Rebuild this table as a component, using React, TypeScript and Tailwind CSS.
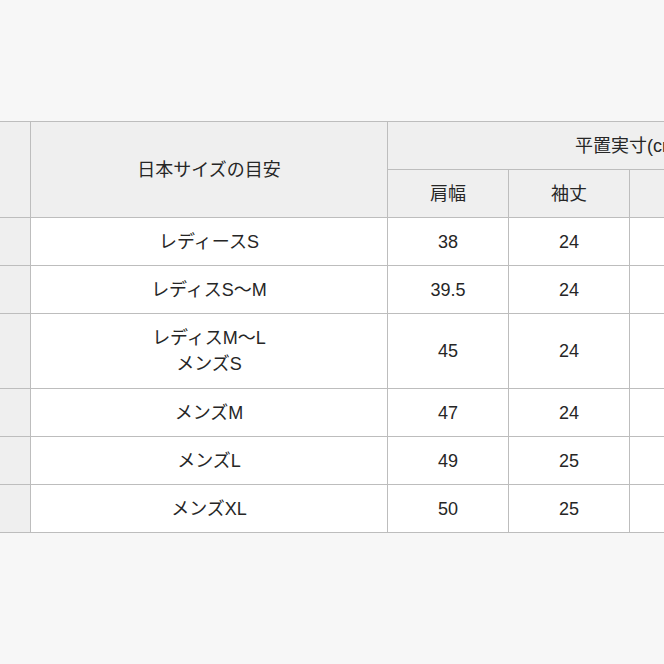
const font = 'font-["Liberation_Sans","Noto_Sans_CJK_JP",sans-serif]';

type Row = { size: string[]; shoulder: string; sleeve: string; length: string; width: string };

const rows: Row[] = [
  { size: ['レディースS'], shoulder: '38', sleeve: '24', length: '64', width: '50' },
  { size: ['レディスS〜M'], shoulder: '39.5', sleeve: '24', length: '66', width: '52' },
  { size: ['レディスM〜L', 'メンズS'], shoulder: '45', sleeve: '24', length: '68', width: '55' },
  { size: ['メンズM'], shoulder: '47', sleeve: '24', length: '70', width: '57' },
  { size: ['メンズL'], shoulder: '49', sleeve: '25', length: '72', width: '59' },
  { size: ['メンズXL'], shoulder: '50', sleeve: '25', length: '74', width: '61' },
];

const cell = 'border border-[#bdbdbd] text-center align-middle p-0';

export default function App() {
  return (
    <div className={`w-[664px] h-[664px] overflow-hidden bg-[#f7f7f7] pt-[121px] ${font}`}>
      <table className="table-fixed border-collapse ml-[-13px] w-[883px] text-[18px] leading-[26px] text-[#262626]">
        <colgroup>
          <col className="w-[43px]" />
          <col className="w-[357px]" />
          <col className="w-[121px]" />
          <col className="w-[121px]" />
          <col className="w-[121px]" />
          <col className="w-[120px]" />
        </colgroup>
        <thead>
          <tr className="h-[48px] bg-[#efefef]">
            <th rowSpan={2} className={cell}></th>
            <th rowSpan={2} className={`${cell} font-normal`}>日本サイズの目安</th>
            <th colSpan={4} className={`${cell} font-normal`}>平置実寸(cm)</th>
          </tr>
          <tr className="h-[48px] bg-[#efefef]">
            <th className={`${cell} font-normal`}>肩幅</th>
            <th className={`${cell} font-normal`}>袖丈</th>
            <th className={`${cell} font-normal`}>着丈</th>
            <th className={`${cell} font-normal`}>身幅</th>
          </tr>
        </thead>
        <tbody>
          {rows.map((r) => (
            <tr key={r.size.join('/')} className={r.size.length > 1 ? 'h-[75px]' : 'h-[48px]'}>
              <td className={`${cell} bg-[#efefef]`}></td>
              <td className={`${cell} bg-white`}>
                {r.size.map((s) => (
                  <div key={s}>{s}</div>
                ))}
              </td>
              <td className={`${cell} bg-white`}>{r.shoulder}</td>
              <td className={`${cell} bg-white`}>{r.sleeve}</td>
              <td className={`${cell} bg-white`}>{r.length}</td>
              <td className={`${cell} bg-white`}>{r.width}</td>
            </tr>
          ))}
        </tbody>
      </table>
    </div>
  );
}
